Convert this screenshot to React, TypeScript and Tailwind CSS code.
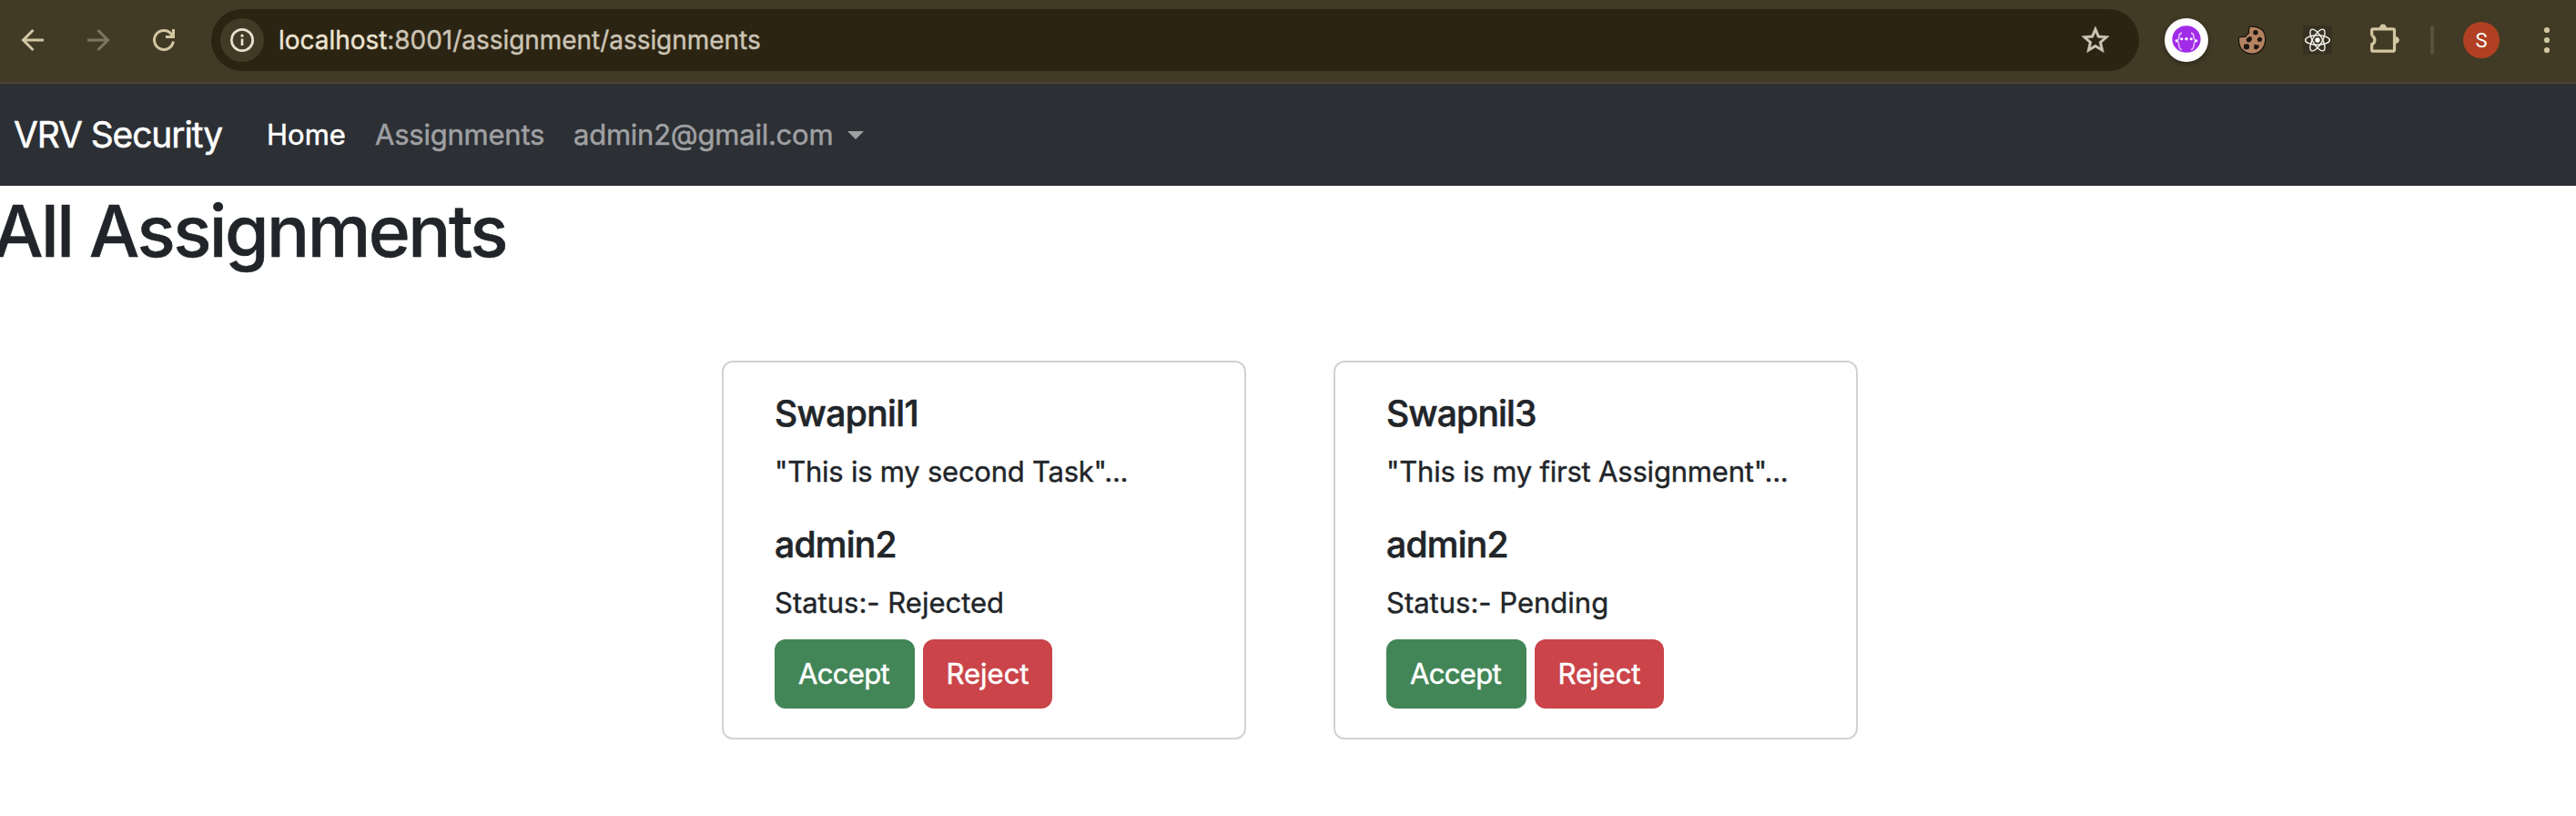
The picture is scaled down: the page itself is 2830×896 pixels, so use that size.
import React from "react";

type Assignment = {
  student: string;
  task: string;
  taskSpacing: string;
  nameSpacing: string;
  admin: string;
  status: string;
};

const assignments: Assignment[] = [
  {
    student: "Swapnil1",
    nameSpacing: "tracking-[-0.63px]",
    task: '"This is my second Task"...',
    taskSpacing: "tracking-[-0.24px]",
    admin: "admin2",
    status: "Rejected",
  },
  {
    student: "Swapnil3",
    nameSpacing: "tracking-[-0.84px]",
    task: '"This is my first Assignment"...',
    taskSpacing: "tracking-[-0.2px]",
    admin: "admin2",
    status: "Pending",
  },
];

function BackIcon() {
  return (
    <svg className="size-9 shrink-0" viewBox="0 0 36 36" fill="none" stroke="#d3c6a2" strokeWidth="3">
      <path d="M30 18H8.5M18.5 7L7.5 18L18.5 29" />
    </svg>
  );
}

function ForwardIcon() {
  return (
    <svg className="ml-9 size-9 shrink-0" viewBox="0 0 36 36" fill="none" stroke="#7f7660" strokeWidth="3">
      <path d="M6 18H27.5M17.5 7L28.5 18L17.5 29" />
    </svg>
  );
}

function ReloadIcon() {
  return (
    <svg className="ml-9 size-9 shrink-0" viewBox="0 0 36 36" fill="none" stroke="#d3c6a2" strokeWidth="3">
      <path d="M28.4 19.5A10.5 10.5 0 1 1 26.2 11.4L28 14" />
      <path d="M28.5 6V14.5H20" />
    </svg>
  );
}

function InfoIcon() {
  return (
    <svg className="size-7" viewBox="0 0 28 28" fill="none">
      <circle cx="14" cy="14" r="11.7" stroke="#e9e1d1" strokeWidth="2.7" />
      <path d="M14 12.6V20" stroke="#e9e1d1" strokeWidth="2.6" />
      <circle cx="14" cy="9.2" r="1.6" fill="#e9e1d1" />
    </svg>
  );
}

function StarIcon() {
  return (
    <svg className="mr-[30px] size-9 shrink-0" viewBox="0 0 24 24" fill="#cdc6b8" stroke="#cdc6b8" strokeWidth="0.4">
      <path d="M22 9.24l-7.19-.62L12 2 9.19 8.63 2 9.24l5.46 4.73L5.82 21 12 17.27 18.18 21l-1.63-7.03L22 9.24zM12 15.4l-3.76 2.27 1-4.28-3.32-2.88 4.38-.38L12 6.1l1.71 4.04 4.38.38-3.32 2.88 1 4.28L12 15.4z" />
    </svg>
  );
}

function BracesIcon() {
  return (
    <div className="ml-7 flex size-12 shrink-0 items-center justify-center rounded-full bg-white shadow-[0_2px_5px_rgba(0,0,0,0.35)]">
      <svg className="size-8" viewBox="0 0 32 32" fill="none">
        <ellipse cx="16" cy="15" rx="15.6" ry="14.8" fill="#a12be8" />
        <g stroke="#dcaef7" strokeWidth="1.8">
          <path d="M11 8.5C7.5 8.5 8 11.5 7.8 13.5S6.5 16.5 5 16.8C7 17 7.5 18.5 7.6 20.5S8 26 11 26.5" />
          <path d="M21 8.5C24.5 8.5 24 11.5 24.2 13.5S25.5 16.5 27 16.8C25 17 24.5 18.5 24.4 20.5S24 26 21 26.5" />
        </g>
        <g fill="#ffffff">
          <circle cx="10.8" cy="14.8" r="1.5" />
          <circle cx="16" cy="14.8" r="1.7" />
          <circle cx="21.2" cy="14.8" r="1.5" />
          <circle cx="5.2" cy="16.8" r="1.5" />
          <circle cx="26.8" cy="16.8" r="1.5" />
        </g>
      </svg>
    </div>
  );
}

function CookieIcon() {
  return (
    <svg className="ml-8 size-8 shrink-0" viewBox="0 0 32 32">
      <path
        d="M13.5 1.2C18 0.8 23 1.5 27 4.8C30.5 8 31.2 12 30.6 17.5C30 24 25 30.5 17.5 31.2C9 31.5 2.5 26 1.8 19C1.5 16.5 1.3 14.5 1.8 13C4 13 5 12.8 5.8 12.3C8 13 10 12.3 10.3 10C12.5 9.5 13.3 7.5 12.3 5.5C13.5 4.3 12.5 2.5 13.5 1.2Z"
        fill="#b58261"
        stroke="#17120d"
        strokeWidth="1.2"
      />
      <g fill="#1c1611">
        <circle cx="20" cy="7.8" r="2.7" />
        <path d="M10.8 13.5L13.5 12L16 13L15.8 16L13.5 18.5L10.5 18L9.8 15.5Z" />
        <path d="M22.5 13.5L25 12.4L27.3 14.5L26.5 17.5L23.5 18L21.6 16Z" />
        <rect x="7" y="20.2" width="6" height="6" rx="2" />
        <path d="M18.5 20.5L20.8 21.2L23.5 21.5L23.8 24L21 26.5L18.2 25.5Z" />
      </g>
    </svg>
  );
}

function ReactIcon() {
  return (
    <div className="ml-10 size-8 shrink-0 rounded-[3px] bg-[#363120]">
      <svg className="size-8" viewBox="0 0 32 32" fill="none" stroke="#f4f3f0" strokeWidth="1.4">
        <ellipse cx="16" cy="16" rx="13.4" ry="5.2" />
        <ellipse cx="16" cy="16" rx="13.4" ry="5.2" transform="rotate(60 16 16)" />
        <ellipse cx="16" cy="16" rx="13.4" ry="5.2" transform="rotate(120 16 16)" />
        <circle cx="16" cy="16" r="2.7" fill="#ffffff" stroke="none" />
      </svg>
    </div>
  );
}

function PuzzleIcon() {
  return (
    <svg className="ml-10 size-9 shrink-0" viewBox="0 0 36 36" fill="none">
      <path
        d="M3.7 13.2V7.3Q3.7 5.8 5.2 5.8H27Q28.5 5.8 28.5 7.3V28.7Q28.5 30.2 27 30.2H5.2Q3.7 30.2 3.7 28.7V22.8A5.2 5.2 0 0 0 3.7 13.2"
        stroke="#d3c6a2"
        strokeWidth="3.2"
      />
      <path d="M12 5A4 4.6 0 0 1 20 5ZM29.5 14A4.4 4 0 0 1 29.5 22Z" fill="#d3c6a2" />
    </svg>
  );
}

function MenuDots() {
  return (
    <svg className="ml-10 h-9 w-6 shrink-0" viewBox="0 0 24 36" fill="#d3c6a2">
      <circle cx="12" cy="7" r="3.1" />
      <circle cx="12" cy="18" r="3.1" />
      <circle cx="12" cy="29" r="3.1" />
    </svg>
  );
}

function BrowserBar() {
  return (
    <header className="flex h-[92px] items-center border-b-2 border-[#4c4637] bg-[#413a25] pb-0.5 pl-[18px]">
      <BackIcon />
      <ForwardIcon />
      <ReloadIcon />
      <div className="ml-[34px] flex h-[68px] w-[2118px] shrink-0 items-center rounded-full bg-[#2c2412] pl-2.5">
        <div className="flex size-12 shrink-0 items-center justify-center rounded-full bg-[#413a25]">
          <InfoIcon />
        </div>
        <div className="ml-4 grow text-[28px] leading-8 tracking-[-0.04px] text-[#cbc4b6] [-webkit-text-stroke:0.4px]">
          <span className="text-[#ebe3d3]">localhost</span>:8001/assignment/assignments
        </div>
        <StarIcon />
      </div>
      <BracesIcon />
      <CookieIcon />
      <ReactIcon />
      <PuzzleIcon />
      <div className="ml-8 h-8 w-1 shrink-0 rounded-full bg-[#5a5139]" />
      <div className="ml-8 flex size-10 shrink-0 items-center justify-center rounded-full bg-[#b04021] font-[Roboto,sans-serif] text-[22px] text-white">
        S
      </div>
      <MenuDots />
    </header>
  );
}

function Navbar() {
  return (
    <nav className="flex h-28 items-center bg-[#2c2f34] pt-px pl-[15px] text-[31px] text-[#9fa0a2] [-webkit-text-stroke:0.5px]">
      <a className="w-[278px] text-[39px] tracking-[-1.13px] text-white">VRV Security</a>
      <a className="w-[119px] text-white">Home</a>
      <a className="w-[218px] tracking-[-0.23px]">Assignments</a>
      <a className="tracking-[-0.24px]">admin2@gmail.com</a>
      <svg className="mb-px ml-[16px] h-[9px] w-[18px]" viewBox="0 0 18 9" fill="#9fa0a2">
        <path d="M0 0H18L9 9Z" />
      </svg>
    </nav>
  );
}

function AssignmentCard({ item }: { item: Assignment }) {
  return (
    <article className="h-[416px] w-[576px] rounded-xl border-2 border-[#d2d2d3] bg-white py-8 pl-14 text-[31px] leading-[48px] [-webkit-text-stroke:0.4px]">
      <h5 className={`mb-4 text-[39px] leading-[48px] font-medium [-webkit-text-stroke:0.6px] ${item.nameSpacing}`}>
        {item.student}
      </h5>
      <p className={`mb-8 ${item.taskSpacing}`}>{item.task}</p>
      <h5 className="mb-4 text-[39px] leading-[48px] font-medium tracking-[-0.74px] [-webkit-text-stroke:0.6px]">
        {item.admin}
      </h5>
      <p className="mb-4">Status:- {item.status}</p>
      <div className="flex gap-[9px] text-white [-webkit-text-stroke:0.5px]">
        <button className="h-[76px] w-[154px] rounded-xl bg-[#428657] pr-0.5 tracking-[-0.69px]">Accept</button>
        <button className="h-[76px] w-[142px] rounded-xl bg-[#ca444a]">Reject</button>
      </div>
    </article>
  );
}

export default function App() {
  return (
    <div className="h-[896px] w-[2830px] overflow-hidden bg-white font-[Inter,'Noto_Sans',sans-serif] text-[#212529]">
      <BrowserBar />
      <Navbar />
      <main>
        <h1 className="-ml-2 h-48 pt-0.5 text-[78.5px] leading-[96px] font-medium tracking-[-2.6px] [-webkit-text-stroke:0.4px]">
          All Assignments
        </h1>
        <section className="flex gap-24 pl-[793px]">
          {assignments.map((item) => (
            <AssignmentCard key={item.student} item={item} />
          ))}
        </section>
      </main>
    </div>
  );
}
